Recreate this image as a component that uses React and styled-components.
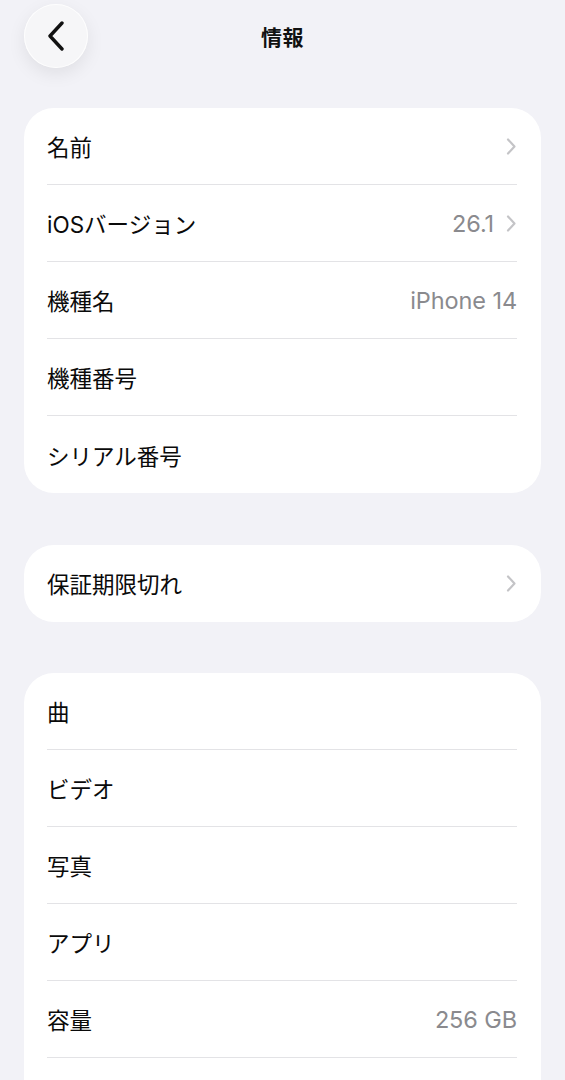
import React from "react";
import styled, { createGlobalStyle } from "styled-components";

const Global = createGlobalStyle`
  html, body {
    margin: 0;
    padding: 0;
    background: #f2f2f7;
  }
  body {
    font-family: Inter, "Noto Sans CJK JP", "Noto Sans", sans-serif;
    -webkit-font-smoothing: antialiased;
  }
`;

const Page = styled.div`
  min-height: 1080px;
  background: #f2f2f7;
  padding: 4px 24px 40px;
  box-sizing: border-box;
  display: flex;
  flex-direction: column;
`;

const Header = styled.header`
  display: grid;
  grid-template-columns: 64px 1fr 64px;
  align-items: center;
  height: 64px;
  margin-bottom: 40px;
`;

const BackButton = styled.button`
  width: 64px;
  height: 64px;
  border-radius: 50%;
  border: none;
  padding: 0;
  background: #f6f6f8;
  box-shadow: 0 6px 18px rgba(0, 0, 0, 0.08), 0 0 0 1px rgba(255, 255, 255, 0.8) inset;
  display: flex;
  align-items: center;
  justify-content: center;
  cursor: pointer;
`;

const Title = styled.h1`
  margin: 0;
  text-align: center;
  font-size: 21px;
  font-weight: 700;
  color: #111;
  letter-spacing: 0.5px;
`;

const Sections = styled.div`
  display: flex;
  flex-direction: column;
  gap: 51.5px;
`;

const Card = styled.section`
  background: #ffffff;
  border-radius: 30px;
  padding: 0 24px 0 23px;
  overflow: hidden;
`;

const Row = styled.div`
  height: 77px;
  box-sizing: border-box;
  display: flex;
  align-items: center;
  justify-content: space-between;
  border-bottom: ${(p) => (p.$last ? "none" : "1px solid #e3e3e6")};
`;

const Label = styled.span`
  font-size: 22.5px;
  color: #0a0a0a;
  font-weight: 400;
`;

const Right = styled.div`
  display: flex;
  align-items: center;
  gap: 12px;
`;

const Value = styled.span`
  font-size: 23.5px;
  color: #8a8a8e;
  letter-spacing: -0.1px;
`;

const Chevron = () => (
  <svg width="11" height="17" viewBox="0 0 11 17" fill="none">
    <path
      d="M2 1.5 L8.5 8.5 L2 15.5"
      stroke="#c4c4c7"
      strokeWidth="2.2"
      strokeLinecap="round"
      strokeLinejoin="round"
    />
  </svg>
);

const BackIcon = () => (
  <svg width="20" height="30" viewBox="0 0 20 30" fill="none">
    <path
      d="M16 2 L4 15 L16 28"
      stroke="#111"
      strokeWidth="3.4"
      strokeLinecap="round"
      strokeLinejoin="round"
    />
  </svg>
);

const sections = [
  [
    { label: "名前", value: "", chevron: true },
    { label: "iOSバージョン", value: "26.1", chevron: true },
    { label: "機種名", value: "iPhone 14" },
    { label: "機種番号", value: "" },
    { label: "シリアル番号", value: "" },
  ],
  [{ label: "保証期限切れ", value: "", chevron: true }],
  [
    { label: "曲", value: "" },
    { label: "ビデオ", value: "" },
    { label: "写真", value: "" },
    { label: "アプリ", value: "" },
    { label: "容量", value: "256 GB" },
    { label: "", value: "" },
  ],
];

export default function App() {
  return (
    <>
      <Global />
      <Page>
        <Header>
          <BackButton aria-label="戻る">
            <BackIcon />
          </BackButton>
          <Title>情報</Title>
          <span />
        </Header>
        <Sections>
          {sections.map((rows, si) => (
            <Card key={si}>
              {rows.map((r, i) => (
                <Row key={i} $last={i === rows.length - 1}>
                  <Label>{r.label}</Label>
                  <Right>
                    {r.value && <Value>{r.value}</Value>}
                    {r.chevron && <Chevron />}
                  </Right>
                </Row>
              ))}
            </Card>
          ))}
        </Sections>
      </Page>
    </>
  );
}
